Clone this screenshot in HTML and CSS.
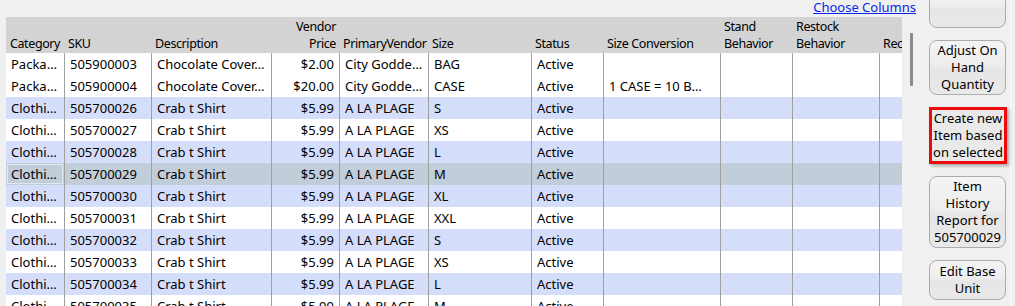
FILE: index.html
```html
<!DOCTYPE html>
<html lang="en">
<head>
    <meta charset="UTF-8">
    <title>Items</title>
    <link rel="stylesheet" href="styles.css">
</head>
<body>
    <div class="window">
        <div class="main">
            <div class="toolbar">
                <a href="#" class="choose-link">Choose Columns</a>
            </div>
            <div class="grid-area">
                <div class="grid">
                    <div class="grid-row grid-head">
                        <div class="cell">Category</div>
                        <div class="cell">SKU</div>
                        <div class="cell">Description</div>
                        <div class="cell num">Vendor<br>Price</div>
                        <div class="cell">PrimaryVendor</div>
                        <div class="cell">Size</div>
                        <div class="cell">Status</div>
                        <div class="cell">Size Conversion</div>
                        <div class="cell">Stand<br>Behavior</div>
                        <div class="cell">Restock<br>Behavior</div>
                        <div class="cell">Rec</div>
                    </div>
                    <div id="rows"></div>
                </div>
                <div class="scroll-track">
                    <div class="scroll-thumb"></div>
                </div>
            </div>
        </div>
        <div class="side">
            <button class="side-btn">&nbsp;<br>&nbsp;</button>
            <button class="side-btn">Adjust On<br>Hand<br>Quantity</button>
            <button class="side-btn highlighted">Create new<br>Item based<br>on selected</button>
            <button class="side-btn">Item<br>History<br>Report for<br>505700029</button>
            <button class="side-btn">Edit Base<br>Unit</button>
        </div>
    </div>

    <script>
        // rows of the item list
        const items = [
            ['Packa…', '505900003', 'Chocolate Cover…', '$2.00', 'City Godde…', 'BAG', 'Active', '', 'plain'],
            ['Packa…', '505900004', 'Chocolate Cover…', '$20.00', 'City Godde…', 'CASE', 'Active', '1 CASE = 10 B…', 'plain'],
            ['Clothi…', '505700026', 'Crab t Shirt', '$5.99', 'A LA PLAGE', 'S', 'Active', '', 'alt'],
            ['Clothi…', '505700027', 'Crab t Shirt', '$5.99', 'A LA PLAGE', 'XS', 'Active', '', 'plain'],
            ['Clothi…', '505700028', 'Crab t Shirt', '$5.99', 'A LA PLAGE', 'L', 'Active', '', 'alt'],
            ['Clothi…', '505700029', 'Crab t Shirt', '$5.99', 'A LA PLAGE', 'M', 'Active', '', 'selected'],
            ['Clothi…', '505700030', 'Crab t Shirt', '$5.99', 'A LA PLAGE', 'XL', 'Active', '', 'alt'],
            ['Clothi…', '505700031', 'Crab t Shirt', '$5.99', 'A LA PLAGE', 'XXL', 'Active', '', 'plain'],
            ['Clothi…', '505700032', 'Crab t Shirt', '$5.99', 'A LA PLAGE', 'S', 'Active', '', 'alt'],
            ['Clothi…', '505700033', 'Crab t Shirt', '$5.99', 'A LA PLAGE', 'XS', 'Active', '', 'plain'],
            ['Clothi…', '505700034', 'Crab t Shirt', '$5.99', 'A LA PLAGE', 'L', 'Active', '', 'alt'],
            ['Clothi…', '505700035', 'Crab t Shirt', '$5.99', 'A LA PLAGE', 'M', 'Active', '', 'plain']
        ];

        const rows = document.getElementById('rows');
        items.forEach(item => {
            const row = document.createElement('div');
            row.className = 'grid-row ' + item[8];
            row.innerHTML = `
                <div class="cell first">${item[0]}</div>
                <div class="cell">${item[1]}</div>
                <div class="cell">${item[2]}</div>
                <div class="cell num">${item[3]}</div>
                <div class="cell">${item[4]}</div>
                <div class="cell">${item[5]}</div>
                <div class="cell">${item[6]}</div>
                <div class="cell">${item[7]}</div>
                <div class="cell"></div>
                <div class="cell"></div>
                <div class="cell"></div>
            `;
            rows.appendChild(row);
        });
    </script>
</body>
</html>
```

FILE: styles.css
```css
html, body {
    margin: 0;
    height: 306px;
    overflow: hidden;
}
body {
    font-family: "Noto Sans", "Open Sans", sans-serif;
    font-size: 13px;
    background-color: #f0f0f0;
    color: #000;
}
.window {
    display: flex;
    height: 306px;
}
.main {
    width: 918px;
    flex: 0 0 auto;
}
.toolbar {
    height: 17px;
    line-height: 15px;
    text-align: right;
    padding-right: 2px;
}
.choose-link {
    color: #0a24e8;
    text-decoration: underline;
}
.grid-area {
    display: flex;
}
.grid {
    margin-left: 6px;
    width: 896px;
    overflow: hidden;
}
.grid-row {
    display: grid;
    grid-template-columns: 58px 87px 120px 68px 89px 103px 72px 117px 72px 87px 23px;
    height: 22px;
    line-height: 22px;
    background-color: #fff;
}
.grid-row.alt {
    background-color: #d4defb;
}
.grid-row.selected {
    background-color: #c1cdd9;
}
.cell {
    padding: 0 5px;
    white-space: nowrap;
    overflow: hidden;
    border-left: 1px solid #a0a0a0;
}
.cell.first {
    border-left: none;
}
.cell.num {
    text-align: right;
}
.selected .cell.first {
    outline: 1px solid #e2e8ef;
    outline-offset: -2px;
}
.grid-head {
    height: 36px;
    line-height: 17px;
    font-size: 12.5px;
    letter-spacing: -0.4px;
    background-color: #d3d3d3;
    align-items: end;
    padding-bottom: 1px;
    box-sizing: border-box;
}
.grid-head .cell {
    border-left: none;
    padding: 0 3px 0 4px;
    overflow: visible;
}
.scroll-track {
    width: 16px;
}
.scroll-thumb {
    margin: 16px 0 0 8px;
    width: 3px;
    height: 53px;
    background-color: #8a8a8a;
    border-radius: 1px;
}
.side {
    display: flex;
    flex-direction: column;
    gap: 12px;
    margin-left: 11px;
    width: 81px;
    border-right: 1px solid #f8f8f8;
}
.side-btn {
    width: 77px;
    min-height: 40px;
    padding: 1px 0;
    font-family: inherit;
    font-size: inherit;
    line-height: 17px;
    color: #000;
    text-align: center;
    border: 1px solid #acacac;
    border-radius: 8px;
    background: linear-gradient(to bottom, #f4f4f4 0%, #ededed 45%, #e6e6e6 55%, #e9e9e9 100%);
    flex: 0 0 auto;
}
.side-btn:first-child {
    margin-top: -12px;
    height: 39px;
}
.side-btn.highlighted {
    width: 78px;
    padding: 0;
    border: 3px solid #ee0a0a;
    border-radius: 0;
    background: #e9e9e9;
    box-shadow: 2px 2px 3px rgba(0, 0, 0, 0.3);
}
```
